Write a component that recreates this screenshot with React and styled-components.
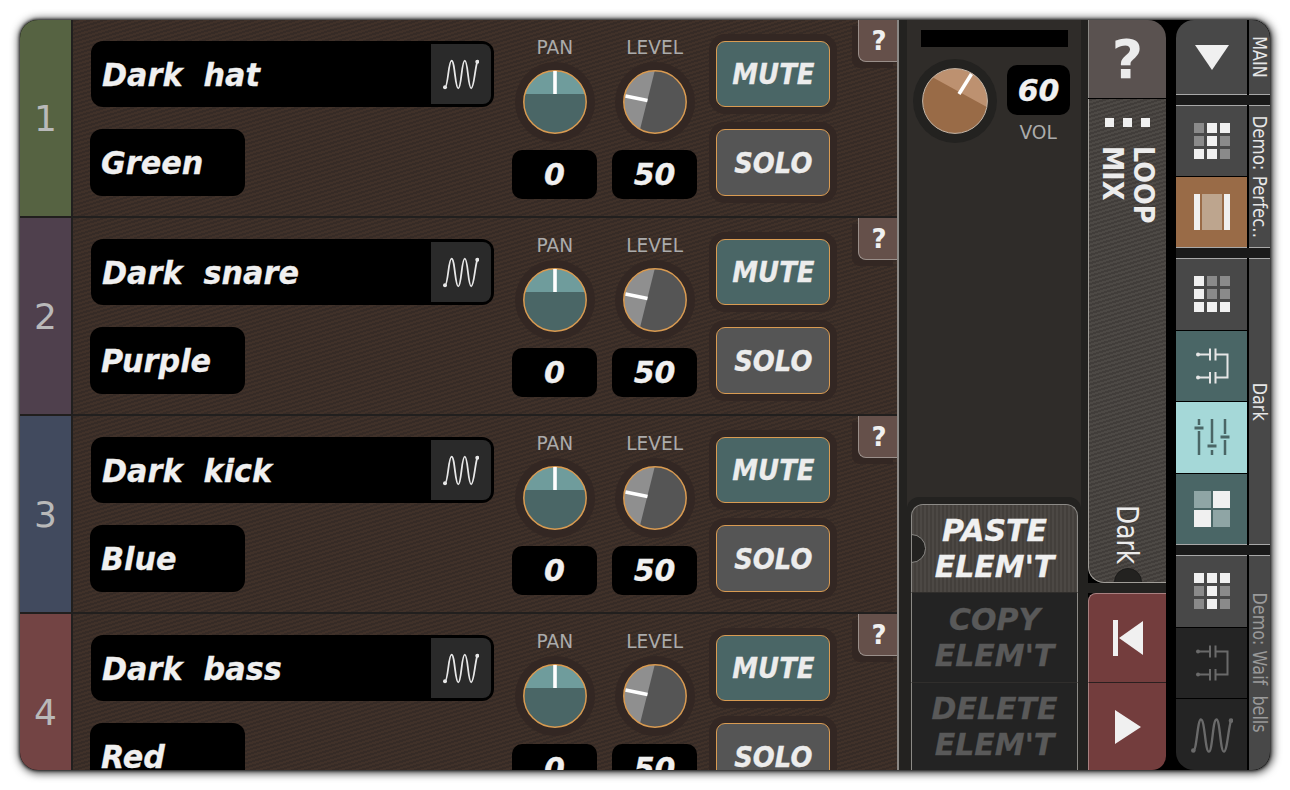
import React from 'react';
import styled, { createGlobalStyle } from 'styled-components';

const GlobalStyle = createGlobalStyle`
  html, body { margin: 0; padding: 0; background: #fff; }
  body { font-family: "DejaVu Sans", sans-serif; overflow: hidden; }
`;

const tracks = [
  { num: 1, name: 'Dark  hat', color: 'Green', tint: '#566342' },
  { num: 2, name: 'Dark  snare', color: 'Purple', tint: '#4f404d' },
  { num: 3, name: 'Dark  kick', color: 'Blue', tint: '#414a5e' },
  { num: 4, name: 'Dark  bass', color: 'Red', tint: '#734444' },
];

const Page = styled.div`
  width: 1290px;
  height: 790px;
  padding: 20px;
  box-sizing: border-box;
`;

const Frame = styled.div`
  width: 1250px;
  height: 750px;
  display: flex;
  background: #000;
  border-radius: 18px;
  overflow: hidden;
  box-shadow: 0 0 3px 1px rgba(0, 0, 0, 0.7), 1px 1px 9px 2px rgba(0, 0, 0, 0.75);
`;

const TrackList = styled.div`
  width: 879px;
  flex: none;
  border-right: 2px solid #8a8784;
  box-sizing: border-box;
  overflow: hidden;
`;

const Track = styled.div`
  height: 198px;
  display: flex;
  position: relative;
  box-sizing: border-box;
  border-bottom: 2px solid #211f1e;
`;

const TrackNumber = styled.div`
  width: 53px;
  flex: none;
  box-sizing: border-box;
  border-right: 2px solid #211f1e;
  background: ${(p) => p.$tint};
  color: #b9b9b9;
  font-size: 36px;
  display: flex;
  align-items: center;
  justify-content: center;
`;

const TrackBody = styled.div`
  flex: 1;
  display: flex;
  background: repeating-linear-gradient(-17deg, #403129 0 2px, #362b26 2px 4px);
`;

const NameCol = styled.div`
  width: 403px;
  margin: 0 18px;
  padding-top: 21px;
`;

const NameBox = styled.div`
  height: 66px;
  box-sizing: border-box;
  background: #000;
  border-radius: 12px;
  display: flex;
  align-items: center;
  justify-content: space-between;
  padding: 3px 3px 3px 11px;
`;

const NameText = styled.div`
  padding-top: 1px;
  color: #f0f0f0;
  font-weight: bold;
  font-style: italic;
  font-size: 32px;
  white-space: pre;
  transform: scaleX(0.945);
  transform-origin: left center;
  -webkit-text-stroke: 0.3px currentColor;
`;

const WaveCell = styled.div`
  width: 60px;
  height: 60px;
  background: #2a2a2a;
  border-radius: 0 8px 8px 0;
  display: flex;
  align-items: center;
  justify-content: center;
`;

const ColorBox = styled.div`
  width: 155px;
  height: 67px;
  box-sizing: border-box;
  margin: 22px 0 0 -1px;
  background: #000;
  border-radius: 12px;
  display: flex;
  align-items: center;
  padding-left: 11px;
`;

const KnobCol = styled.div`
  width: 85px;
  margin-right: ${(p) => p.$gap}px;
  padding-top: 16px;
  display: flex;
  flex-direction: column;
  align-items: center;
`;

const KnobLabel = styled.div`
  height: 23px;
  line-height: 22px;
  font-size: 20px;
  color: #ababab;
  transform: scaleX(0.93);
`;

const KnobHalo = styled.div`
  width: ${(p) => p.$size}px;
  height: ${(p) => p.$size}px;
  margin-top: ${(p) => p.$top}px;
  flex: none;
  border-radius: 50%;
  background: ${(p) => p.$halo};
  display: flex;
  align-items: center;
  justify-content: center;
`;

const ValueBox = styled.div`
  width: ${(p) => p.$width}px;
  height: ${(p) => p.$height}px;
  margin-top: ${(p) => p.$top}px;
  box-sizing: border-box;
  background: #000;
  border-radius: 10px;
  display: flex;
  align-items: center;
  justify-content: center;
  color: #f0f0f0;
  font-weight: bold;
  font-style: italic;
  font-size: 30px;
  -webkit-text-stroke: 0.3px currentColor;
`;

const ButtonCol = styled.div`
  width: 114px;
  padding-top: 21px;
`;

const TrackButton = styled.div`
  height: ${(p) => p.$height}px;
  margin-bottom: 22px;
  box-sizing: border-box;
  padding-top: 1px;
  border: 1px solid #d99b52;
  border-radius: 9px;
  background: ${(p) => p.$bg};
  box-shadow: 0 0 0 7px #332723;
  display: flex;
  align-items: center;
  justify-content: center;
  color: #ececec;
  font-weight: bold;
  font-style: italic;
  font-size: 28px;
  -webkit-text-stroke: 0.3px currentColor;
`;

const ButtonText = styled.span`
  display: inline-block;
  transform: scaleX(0.925);
`;

const HelpTab = styled.div`
  position: absolute;
  right: -2px;
  top: 0;
  width: 41px;
  height: 42px;
  box-sizing: border-box;
  background: #65504a;
  border-left: 1px solid #9a8f8a;
  border-bottom: 1px solid #9a8f8a;
  border-bottom-left-radius: 8px;
  box-shadow: -6px 6px 0 #332723;
  display: flex;
  align-items: center;
  justify-content: center;
  color: #f0f0f0;
  font-weight: bold;
  font-size: 26px;
`;

const MiddleCol = styled.div`
  width: 189px;
  flex: none;
  box-sizing: border-box;
  padding: 0 7px 0 8px;
  background: #232220;
  display: flex;
`;

const MixPanel = styled.div`
  flex: 1;
  background: #2f2c29;
  padding-top: 10px;
  box-sizing: border-box;
  display: flex;
  flex-direction: column;
`;

const MeterBar = styled.div`
  height: 17px;
  width: 147px;
  margin-left: 14px;
  background: #000;
`;

const VolRow = styled.div`
  display: flex;
  margin: 12px 0 0 6px;
`;

const VolCol = styled.div`
  margin-left: 10px;
  display: flex;
  flex-direction: column;
  align-items: center;
`;

const VolLabel = styled(KnobLabel)`
  margin-top: 6px;
`;

const ClipHalo = styled.div`
  margin-top: auto;
  height: 273px;
  box-sizing: border-box;
  padding: 7px 3px 0 4px;
  background: #232220;
  border-radius: 12px 12px 0 0;
`;

const ClipButton = styled.div`
  height: ${(p) => p.$height}px;
  box-sizing: border-box;
  position: relative;
  overflow: hidden;
  border-left: 1px solid #8c8a86;
  border-right: 1px solid #8c8a86;
  border-top: 1px solid ${(p) => (p.$active ? '#8c8a86' : '#302e2c')};
  border-radius: ${(p) => (p.$active ? '12px 12px 0 0' : '0')};
  background: ${(p) => (p.$active
    ? 'repeating-linear-gradient(90deg, #4c4844 0 2px, #433f3b 2px 4px)'
    : '#232323')};
  color: ${(p) => (p.$active ? '#f0f0f0' : '#595959')};
  font-weight: bold;
  font-style: italic;
  font-size: 30px;
  line-height: 36px;
  text-align: center;
  padding-top: ${(p) => p.$pad}px;
  -webkit-text-stroke: 0.3px currentColor;
`;

const PasteNotch = styled.div`
  position: absolute;
  left: -15px;
  top: 29px;
  width: 27px;
  height: 27px;
  border-radius: 50%;
  background: #232220;
  border: 1px solid #8c8a86;
`;

const LoopCol = styled.div`
  width: 78px;
  flex: none;
  display: flex;
  flex-direction: column;
  background: #000;
`;

const BigHelp = styled.div`
  height: 78px;
  flex: none;
  box-sizing: border-box;
  border-left: 1px solid #8c8a86;
  border-top-right-radius: 18px;
  background: #5a5250;
  display: flex;
  align-items: center;
  justify-content: center;
  color: #ececec;
  font-weight: bold;
  font-size: 54px;
`;

const LoopPanel = styled.div`
  height: 484px;
  margin-top: 1px;
  flex: none;
  box-sizing: border-box;
  position: relative;
  overflow: hidden;
  border-left: 1px solid #a09d98;
  border-bottom: 1px solid #a09d98;
  border-bottom-left-radius: 16px;
  background: repeating-linear-gradient(-17deg, #4d4945 0 2px, #413d3a 2px 4px);
  display: flex;
  flex-direction: column;
  align-items: center;
  padding: 19px 0 18px;
  color: #ececec;
`;

const Dots = styled.div`
  display: flex;
  gap: 9px;
`;

const Dot = styled.div`
  width: 9px;
  height: 9px;
  background: #f0f0f0;
`;

const LoopTitle = styled.div`
  writing-mode: vertical-rl;
  margin-top: 19px;
  font-weight: bold;
  font-size: 28px;
  line-height: 31px;
  white-space: pre;
  transform: scaleY(0.91);
  transform-origin: center top;
`;

const LoopName = styled.div`
  writing-mode: vertical-rl;
  margin-top: auto;
  font-size: 30px;
  transform: scaleY(0.83);
  transform-origin: center bottom;
`;

const LoopNotch = styled.div`
  position: absolute;
  left: 25px;
  bottom: -14px;
  width: 26px;
  height: 26px;
  border-radius: 50%;
  background: #232220;
  border: 1px solid #1c1b1a;
`;

const TransportGap = styled.div`
  height: 10px;
  flex: none;
  background: #232220;
`;

const TransportButton = styled.div`
  height: ${(p) => p.$height}px;
  flex: none;
  box-sizing: border-box;
  background: #733d3d;
  border-left: 1px solid #a98080;
  border-top: ${(p) => (p.$first ? '1px solid #a98080' : '1px solid #2b1f1f')};
  border-radius: ${(p) => p.$radius};
  display: flex;
  align-items: center;
  justify-content: center;
`;

const NavCol = styled.div`
  width: 94px;
  flex: none;
  margin-left: 10px;
  display: flex;
  flex-direction: column;
  background: #1a1a1a;
`;

const NavGroup = styled.div`
  height: ${(p) => p.$height}px;
  flex: none;
  margin-bottom: ${(p) => p.$gap}px;
  display: flex;
  background: #000;
`;

const NavCells = styled.div`
  width: 71px;
  flex: none;
  display: flex;
  flex-direction: column;
  gap: 1px;
`;

const NavCell = styled.div`
  flex: 1;
  background: ${(p) => p.$bg};
  border-top: ${(p) => (p.$lit ? '1px solid #a8a8a8' : 'none')};
  border-bottom: ${(p) => (p.$litBottom ? '1px solid #a8a8a8' : 'none')};
  border-radius: ${(p) => p.$radius || '0'};
  display: flex;
  align-items: center;
  justify-content: center;
`;

const NavLabel = styled.div`
  width: 21px;
  margin-left: 2px;
  flex: none;
  box-sizing: border-box;
  overflow: hidden;
  background: #484848;
  border-top: ${(p) => (p.$lit ? '1px solid #a8a8a8' : 'none')};
  border-bottom: ${(p) => (p.$litBottom ? '1px solid #a8a8a8' : 'none')};
  display: flex;
  align-items: center;
  justify-content: center;
  color: ${(p) => (p.$dim ? '#9a9a9a' : '#e6e6e6')};
`;

const NavLabelText = styled.span`
  writing-mode: vertical-rl;
  font-size: 20px;
  line-height: 21px;
  white-space: pre;
  flex: none;
  transform: scaleY(${(p) => p.$squeeze || 0.8});
`;

const Wave = ({ size = 36, color = '#e8e8e8', stroke = 1.8 }) => (
  <svg width={size} height={size} viewBox="0 0 36 36" fill="none">
    <path
      d="M2 31.3 C5 31.3 5.5 4.7 8.5 4.7 C12 4.7 12 32.3 15.3 32.3 C18.5 32.3 18.5 4.7 21.8 4.7 C25 4.7 25 32.3 28.2 32.3 C31 32.3 32 12 34.3 5.7"
      stroke={color}
      strokeWidth={stroke}
    />
    <circle cx="2" cy="31.3" r="2" fill={color} />
    <circle cx="34.3" cy="5.7" r="2" fill={color} />
  </svg>
);

const MiniGrid = ({ lit }) => (
  <svg width="36" height="36" viewBox="0 0 36 36">
    {lit.map((on, i) => (
      <rect
        key={i}
        x={(i % 3) * 13}
        y={Math.floor(i / 3) * 13}
        width="10"
        height="10"
        fill={on ? '#f0f0f0' : '#8a8a8a'}
      />
    ))}
  </svg>
);

const SplitIcon = () => (
  <svg width="36" height="36" viewBox="0 0 36 36">
    <rect x="0" y="0" width="6" height="36" fill="#f0f0f0" />
    <rect x="8" y="0" width="20" height="36" fill="#bda58e" />
    <rect x="30" y="0" width="6" height="36" fill="#f0f0f0" />
  </svg>
);

const LinkIcon = ({ color }) => (
  <svg width="36" height="36" viewBox="0 0 36 36" fill="none" stroke={color} strokeWidth="2">
    <path d="M4 6.5H16M4 29.5H16" />
    <path d="M16 0.5V12.5M21.5 0.5V12.5M16 24V35.5M21.5 24V35.5" />
    <path d="M21.5 6.5H33.5V29.5H21.5" />
    <circle cx="4" cy="6.5" r="2" fill={color} stroke="none" />
    <circle cx="4" cy="29.5" r="2" fill={color} stroke="none" />
  </svg>
);

const SlidersIcon = ({ color }) => (
  <svg width="36" height="36" viewBox="0 0 36 36" fill="none" stroke={color} strokeWidth="2.5">
    <path d="M5 0V6M5 12V36M18 0V24M18 31V36M31 0V15M31 21V36" />
    <path d="M0.5 9H9.5M13.5 27H22.5M26.5 18H35.5" strokeWidth="3" />
  </svg>
);

const QuadIcon = () => (
  <svg width="36" height="36" viewBox="0 0 36 36">
    <rect x="0" y="0" width="17" height="17" fill="#8fa5a5" />
    <rect x="19" y="0" width="17" height="17" fill="#f0f0f0" />
    <rect x="0" y="19" width="17" height="17" fill="#f0f0f0" />
    <rect x="19" y="19" width="17" height="17" fill="#8fa5a5" />
  </svg>
);

const PanKnob = () => (
  <svg width="64" height="64" viewBox="-32 -32 64 64">
    <circle r="31.2" fill="#4a6666" />
    <path d="M-30.2 -8 A31.2 31.2 0 0 1 30.2 -8 Z" fill="#6f9c9c" />
    <circle r="31.2" fill="none" stroke="#d99b52" strokeWidth="1.5" />
    <rect x="-1.8" y="-31" width="3.6" height="23" fill="#fff" />
  </svg>
);

const LevelKnob = () => (
  <svg width="64" height="64" viewBox="-32 -32 64 64">
    <circle r="31.2" fill="#555" />
    <path d="M-0.3 -31 A31.2 31.2 0 0 0 -15 27.4 Z" fill="#8f8f8f" />
    <circle r="31.2" fill="none" stroke="#d99b52" strokeWidth="1.5" />
    <path d="M-29.5 -6 L-7.5 -1.5" stroke="#fff" strokeWidth="3.6" />
  </svg>
);

const VolKnob = () => (
  <svg width="66" height="66" viewBox="-33 -33 66 66">
    <circle r="32.4" fill="#996b47" />
    <path d="M-22 -23.5 A32.4 32.4 0 0 1 31.8 6 Z" fill="#bd9170" />
    <circle r="32.4" fill="none" stroke="#c4b6a8" strokeWidth="1" />
    <path d="M16.5 -27 L4 -7" stroke="#fff" strokeWidth="3.6" />
  </svg>
);

const Back = () => (
  <svg width="30" height="36" viewBox="0 0 30 36" fill="#f0f0f0">
    <rect x="0" y="0" width="5" height="36" />
    <path d="M30 1V35L6 18Z" />
  </svg>
);

const Play = () => (
  <svg width="26" height="34" viewBox="0 0 26 34" fill="#f0f0f0">
    <path d="M0 0V34L26 17Z" />
  </svg>
);

const DownArrow = () => (
  <svg width="34" height="25" viewBox="0 0 34 25" fill="#f0f0f0">
    <path d="M0 0H34L17 25Z" />
  </svg>
);

const TrackRow = ({ track }) => (
  <Track>
    <TrackNumber $tint={track.tint}>{track.num}</TrackNumber>
    <TrackBody>
      <NameCol>
        <NameBox>
          <NameText>{track.name}</NameText>
          <WaveCell>
            <Wave />
          </WaveCell>
        </NameBox>
        <ColorBox>
          <NameText>{track.color}</NameText>
        </ColorBox>
      </NameCol>
      <KnobCol $gap={15}>
        <KnobLabel>PAN</KnobLabel>
        <KnobHalo $size={80} $top={3} $halo="#332723">
          <PanKnob />
        </KnobHalo>
        <ValueBox $width={85} $height={49} $top={8}>0</ValueBox>
      </KnobCol>
      <KnobCol $gap={19}>
        <KnobLabel>LEVEL</KnobLabel>
        <KnobHalo $size={80} $top={3} $halo="#332723">
          <LevelKnob />
        </KnobHalo>
        <ValueBox $width={85} $height={49} $top={8}>50</ValueBox>
      </KnobCol>
      <ButtonCol>
        <TrackButton $height={66} $bg="#4a6666"><ButtonText>MUTE</ButtonText></TrackButton>
        <TrackButton $height={67} $bg="#555555"><ButtonText>SOLO</ButtonText></TrackButton>
      </ButtonCol>
    </TrackBody>
    <HelpTab>?</HelpTab>
  </Track>
);

export default function App() {
  return (
    <Page>
      <GlobalStyle />
      <Frame>
        <TrackList>
          {tracks.map((t) => (
            <TrackRow key={t.num} track={t} />
          ))}
        </TrackList>

        <MiddleCol>
          <MixPanel>
            <MeterBar />
            <VolRow>
              <KnobHalo $size={84} $top={0} $halo="#232220">
                <VolKnob />
              </KnobHalo>
              <VolCol>
                <ValueBox $width={63} $height={50} $top={6}>60</ValueBox>
                <VolLabel>VOL</VolLabel>
              </VolCol>
            </VolRow>
            <ClipHalo>
              <ClipButton $active $height={88} $pad={8}>
                PASTE<br />ELEM'T
                <PasteNotch />
              </ClipButton>
              <ClipButton $height={90} $pad={9}>COPY<br />ELEM'T</ClipButton>
              <ClipButton $height={89} $pad={8}>DELETE<br />ELEM'T</ClipButton>
            </ClipHalo>
          </MixPanel>
        </MiddleCol>

        <LoopCol>
          <BigHelp>?</BigHelp>
          <LoopPanel>
            <Dots><Dot /><Dot /><Dot /></Dots>
            <LoopTitle>{'LOOP\nMIX'}</LoopTitle>
            <LoopName>Dark</LoopName>
            <LoopNotch />
          </LoopPanel>
          <TransportGap />
          <TransportButton $first $height={89} $radius="8px 0 0 0"><Back /></TransportButton>
          <TransportButton $height={88} $radius="0 0 14px 0"><Play /></TransportButton>
        </LoopCol>

        <NavCol>
          <NavGroup $height={75} $gap={10}>
            <NavCells>
              <NavCell $bg="#484848" $litBottom $radius="18px 0 0 0"><DownArrow /></NavCell>
            </NavCells>
            <NavLabel $litBottom><NavLabelText>MAIN</NavLabelText></NavLabel>
          </NavGroup>
          <NavGroup $height={143} $gap={10}>
            <NavCells>
              <NavCell $bg="#484848" $lit>
                <MiniGrid lit={[0, 1, 1, 0, 1, 0, 1, 1, 0]} />
              </NavCell>
              <NavCell $bg="#996b47" $litBottom><SplitIcon /></NavCell>
            </NavCells>
            <NavLabel $lit $litBottom><NavLabelText $squeeze={0.83}>Demo: Perfec..</NavLabelText></NavLabel>
          </NavGroup>
          <NavGroup $height={287} $gap={10}>
            <NavCells>
              <NavCell $bg="#484848" $lit>
                <MiniGrid lit={[1, 0, 0, 1, 0, 0, 1, 1, 1]} />
              </NavCell>
              <NavCell $bg="#4a6666"><LinkIcon color="#e6e6e6" /></NavCell>
              <NavCell $bg="#a5d8d8"><SlidersIcon color="#4a6666" /></NavCell>
              <NavCell $bg="#4a6666" $litBottom><QuadIcon /></NavCell>
            </NavCells>
            <NavLabel $lit $litBottom><NavLabelText>Dark</NavLabelText></NavLabel>
          </NavGroup>
          <NavGroup $height={215} $gap={0}>
            <NavCells>
              <NavCell $bg="#484848" $lit>
                <MiniGrid lit={[1, 1, 1, 0, 1, 0, 0, 1, 0]} />
              </NavCell>
              <NavCell $bg="#242424"><LinkIcon color="#6a6a6a" /></NavCell>
              <NavCell $bg="#242424" $radius="0 0 0 18px">
                <Wave size={42} color="#6a6a6a" stroke={2} />
              </NavCell>
            </NavCells>
            <NavLabel $lit $dim><NavLabelText>Demo: Waif  bells</NavLabelText></NavLabel>
          </NavGroup>
        </NavCol>
      </Frame>
    </Page>
  );
}
